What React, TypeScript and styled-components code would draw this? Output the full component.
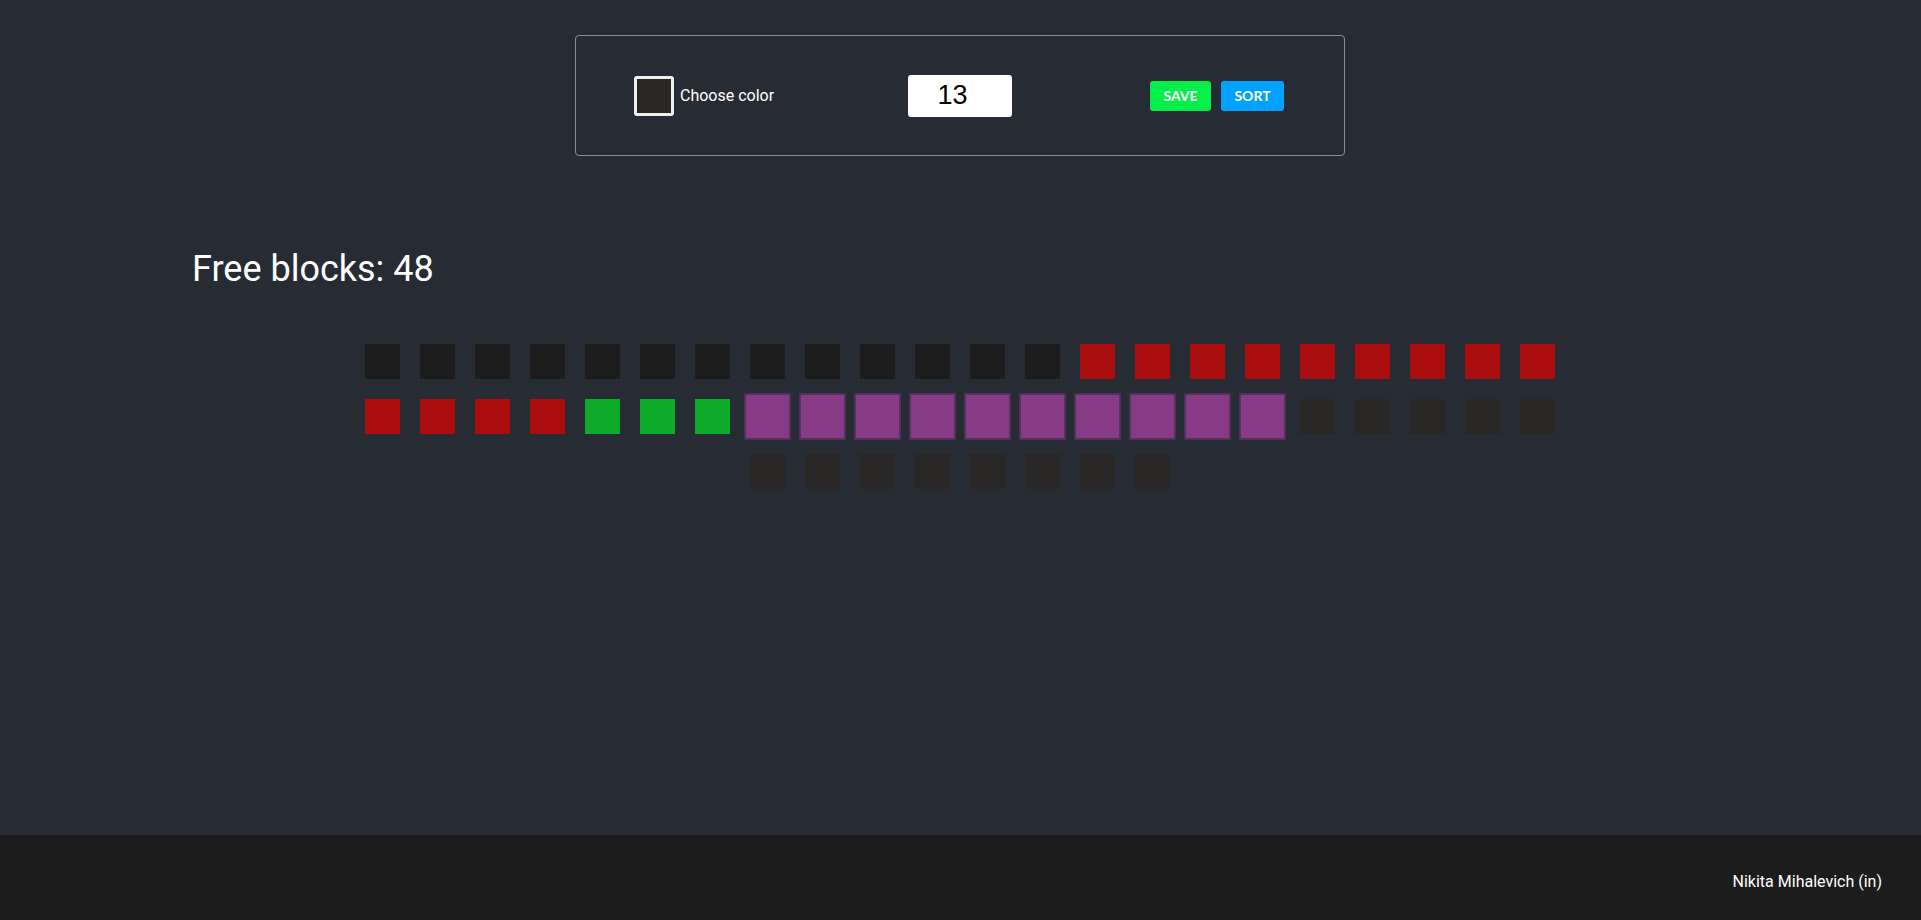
import React from 'react';
import styled, { createGlobalStyle } from 'styled-components';

type BlockKind = 'black' | 'red' | 'green' | 'purple' | 'free';

const colors: Record<BlockKind, string> = {
    black: '#1d1d1d',
    red: '#a90d0d',
    green: '#0cab2a',
    purple: '#873b86',
    free: '#282725',
};

const repeat = (kind: BlockKind, n: number): BlockKind[] => Array(n).fill(kind);

const blocks: BlockKind[] = [
    ...repeat('black', 13),
    ...repeat('red', 13),
    ...repeat('green', 3),
    ...repeat('purple', 10),
    ...repeat('free', 13),
];

export default function App() {
    return (
        <Page>
            <GlobalStyle />
            <Main>
                <Panel>
                    <ColorPicker>
                        <Swatch />
                        <PickerLabel>Choose color</PickerLabel>
                    </ColorPicker>
                    <SizeInput type="text" defaultValue="13" />
                    <Actions>
                        <Button $bg="#05ef4a" $width={61}>SAVE</Button>
                        <Button $bg="#00a2ff" $width={63}>SORT</Button>
                    </Actions>
                </Panel>
                <Title>Free blocks: 48</Title>
                <Grid>
                    {blocks.map((kind, i) => (
                        <Block key={i} $color={colors[kind]} $selected={kind === 'purple'} />
                    ))}
                </Grid>
            </Main>
            <Footer>Nikita Mihalevich (in)</Footer>
        </Page>
    );
}

const GlobalStyle = createGlobalStyle`
  body {
    margin: 0;
    background: #272b34;
    font-family: Roboto, "Liberation Sans", sans-serif;
    color: #fff;
  }
`;

const Page = styled.div`
  min-height: 100vh;
  display: flex;
  flex-direction: column;
`;

const Main = styled.main`
  flex: 1;
  padding: 35px 1px 0 0;
`;

const Panel = styled.section`
  box-sizing: border-box;
  width: 770px;
  height: 121px;
  margin: 0 auto;
  padding: 0 60px 0 58px;
  border: 1px solid #8c8c8c;
  border-radius: 4px;
  display: flex;
  align-items: center;
  justify-content: space-between;
`;

const ColorPicker = styled.label`
  display: flex;
  align-items: center;
  gap: 6px;
`;

const Swatch = styled.div`
  box-sizing: border-box;
  width: 40px;
  height: 40px;
  background: #282724;
  border: 3px solid #f0f0f0;
  border-radius: 3px;
`;

const PickerLabel = styled.span`
  font-size: 16px;
`;

const SizeInput = styled.input`
  box-sizing: border-box;
  width: 104px;
  height: 42px;
  margin-right: 4px;
  padding: 0 15px 0 0;
  border: none;
  border-radius: 3px;
  background: #fff;
  color: #000;
  text-align: center;
  font-family: "Liberation Sans", Arial, sans-serif;
  font-size: 27px;
  outline: none;
`;

const Actions = styled.div`
  display: flex;
  gap: 10px;
`;

const Button = styled.button<{ $bg: string; $width: number }>`
  width: ${(p) => p.$width}px;
  height: 30px;
  padding: 0;
  border: none;
  border-radius: 3px;
  background: ${(p) => p.$bg};
  color: #fff;
  font-family: Lato, sans-serif;
  font-weight: 700;
  font-size: 14px;
`;

const Title = styled.h1`
  margin: 92px 0 0;
  padding-left: 192px;
  font-size: 36px;
  line-height: 42px;
  font-weight: 400;
`;

const Grid = styled.div`
  width: 1190px;
  margin: 54px auto 0;
  display: flex;
  flex-wrap: wrap;
  justify-content: center;
  gap: 20px;
`;

const Block = styled.div<{ $color: string; $selected: boolean }>`
  box-sizing: border-box;
  width: 35px;
  height: 35px;
  background: ${(p) => p.$color};
  border: ${(p) => (p.$selected ? '1px solid #45304f' : 'none')};
  transform: ${(p) => (p.$selected ? 'scale(1.32)' : 'none')};
`;

const Footer = styled.footer`
  box-sizing: border-box;
  height: 85px;
  padding: 37px 39px 0 0;
  background: #1c1c1c;
  text-align: right;
  font-size: 16px;
  line-height: 19px;
`;
